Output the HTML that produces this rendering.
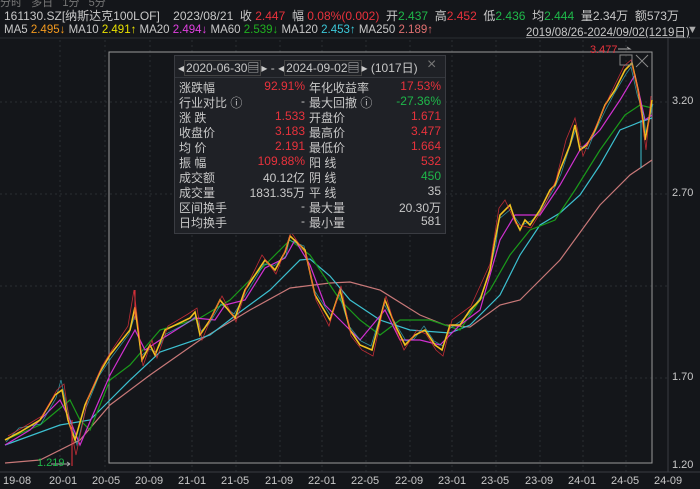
<!DOCTYPE html>
<html><head><meta charset="utf-8"><style>
body{margin:0;background:#14161a;width:700px;height:489px;overflow:hidden;font-family:"Liberation Sans","Noto Sans CJK SC",sans-serif;font-size:11px;color:#c8c8c8;position:relative}
.t{position:absolute;white-space:nowrap}
.r{color:#e8323c}.g{color:#1fb84a}.y{color:#e8e000}.o{color:#f39a1e}.m{color:#e040e0}.gg{color:#20b020}.c{color:#3cc8d8}.p{color:#e07070}
#pop{position:absolute;left:174px;top:55px;width:270px;height:177px;background:#1f2126;border:1px solid #3a3c42}
#pop .row{position:absolute;left:4px;width:262px;height:15px;font-size:12px}
#pop .row span{position:absolute}
</style></head><body>
<div class="t" style="left:0;top:-6px;color:#777">分时 &nbsp; 多日 &nbsp; 1分 &nbsp; 5分</div>
<div class="t" style="left:4px;top:7px;font-size:12px">161130.SZ[纳斯达克100LOF] &nbsp;&nbsp; 2023/08/21 &nbsp;收 <span class="r">2.447</span> &nbsp;幅 <span class="r">0.08%(0.002)</span> &nbsp;开<span class="g">2.437</span> &nbsp;高<span class="r">2.452</span> &nbsp;低<span class="g">2.436</span> &nbsp;均<span class="g">2.444</span> &nbsp;量2.34万 &nbsp;额573万</div>
<div class="t" style="left:4px;top:24px;font-size:11.5px">MA5 <span class="o">2.495↓</span> MA10 <span class="y">2.491↑</span> MA20 <span class="m">2.494↓</span> MA60 <span class="gg">2.539↓</span> MA120 <span class="c">2.453↑</span> MA250 <span class="p">2.189↑</span></div>
<div class="t" style="left:526px;top:24px;font-size:11.5px;text-decoration:underline">2019/08/26-2024/09/02(1219日)</div>
<div class="t" style="left:687px;top:24px;color:#aaa">▼</div>
<svg width="700" height="489" style="position:absolute;left:0;top:0" fill="none">
<g stroke="#2a2d33" stroke-dasharray="2,3" stroke-width="1">
<line x1="0" y1="102" x2="668" y2="102"/><line x1="0" y1="194" x2="668" y2="194"/><line x1="0" y1="286" x2="668" y2="286"/><line x1="0" y1="378" x2="668" y2="378"/>
<line x1="60" y1="40" x2="60" y2="472"/><line x1="105" y1="40" x2="105" y2="472"/><line x1="150" y1="40" x2="150" y2="472"/><line x1="192" y1="40" x2="192" y2="472"/><line x1="236" y1="40" x2="236" y2="472"/><line x1="280" y1="40" x2="280" y2="472"/><line x1="322" y1="40" x2="322" y2="472"/><line x1="366" y1="40" x2="366" y2="472"/><line x1="410" y1="40" x2="410" y2="472"/><line x1="452" y1="40" x2="452" y2="472"/><line x1="496" y1="40" x2="496" y2="472"/><line x1="540" y1="40" x2="540" y2="472"/><line x1="583" y1="40" x2="583" y2="472"/><line x1="626" y1="40" x2="626" y2="472"/>
</g>
<line x1="0" y1="38" x2="700" y2="38" stroke="#2a2d33"/>
<line x1="668" y1="38" x2="668" y2="472" stroke="#3a3c42"/>
<line x1="0" y1="472" x2="700" y2="472" stroke="#3a3c42"/>
<rect x="109" y="52" width="543" height="411" stroke="#9a9a9a" stroke-width="1"/>
<polyline stroke="#c87878" stroke-width="1.2" points="5,463 40,460 80,440 110,405 150,375 200,340 250,310 290,288 330,283 350,282 380,290 420,315 445,325 470,327 500,305 520,300 560,260 600,205 630,175 652,160"/>
<polyline stroke="#3cc0d0" stroke-width="1.2" points="5,445 60,425 90,420 110,400 130,380 160,352 210,335 240,312 270,290 300,260 310,259 330,276 350,300 380,320 410,330 450,333 470,325 500,295 520,255 540,225 560,213 580,195 600,165 620,130 640,122 652,118"/>
<polyline stroke="#1a9a1a" stroke-width="1.2" points="5,440 40,425 70,400 80,420 90,430 110,380 130,365 160,330 200,318 230,300 260,270 290,240 310,255 340,300 360,320 380,335 400,320 430,320 460,330 480,300 490,290 510,255 530,230 555,220 575,190 600,150 625,115 640,105 652,108"/>
<polyline stroke="#d030d0" stroke-width="1.2" points="5,445 30,430 60,400 70,420 80,445 95,410 110,375 135,330 145,350 160,340 195,318 215,320 225,305 245,300 265,268 285,258 295,240 310,265 325,305 340,320 360,340 385,310 400,340 420,340 440,345 460,325 480,310 500,240 515,215 540,215 560,185 580,150 600,130 620,100 635,75 645,120 652,115"/>
<polyline stroke="#3cc0d0" stroke-width="0.8" opacity="0.7" points="6,442 19,428 41,424 56,398 61,380 69,416 77,445 86,408 99,376 111,358 129,334 136,312 141,356 149,349 156,352 166,334 189,322 196,316 201,331 209,324 221,304 234,314 246,294 264,264 274,266 286,256 289,240 304,246 314,290 331,316 339,294 349,326 361,341 371,346 384,304 394,321 406,341 414,339 424,326 434,341 443,346 449,329 461,321 469,314 481,296 489,274 496,244 499,219 511,209 514,216 521,226 524,224 531,221 539,214 551,194 554,189 561,174 569,149 576,129 579,146 588,149 594,134 606,109 614,94 626,74 631,67 637,94 644,116 646,136 647,129 653,104"/>
<polyline stroke="#f0c020" stroke-width="1.6" points="5,440 20,432 40,420 55,395 62,390 68,420 75,440 85,405 100,372 110,355 130,330 135,307 142,360 150,345 155,355 165,330 190,318 195,312 200,335 210,320 220,300 235,318 245,290 265,260 275,270 285,252 290,236 305,250 315,295 330,320 340,290 350,330 360,345 372,350 385,300 395,325 405,345 415,335 425,330 435,345 442,350 450,325 460,325 470,310 480,300 490,270 495,240 500,215 510,205 515,220 520,230 525,220 530,225 540,210 550,190 555,185 560,170 570,145 575,125 580,150 587,145 595,130 605,105 615,90 625,70 632,63 638,90 643,120 645,140 648,125 652,100"/>
<polyline stroke="#e8323c" stroke-width="0.8" opacity="0.8" points="8,436 22,428 42,416 57,390 64,384 70,425 76,455 88,398 102,366 112,350 128,326 134,290 143,366 152,340 157,358 168,326 188,314 197,308 202,340 212,316 222,296 236,322 247,286 262,255 276,274 286,248 291,232 306,254 316,300 329,326 341,286 351,336 362,350 373,356 386,296 396,330 404,350 417,330 426,334 436,350 443,356 452,320 471,306 490,264 499,208 505,200 516,224 531,228 545,205 556,180 566,140 575,118 583,156 596,126 610,95 624,66 631,60 639,95 646,150 651,96"/>
<line x1="641" y1="120" x2="641" y2="168" stroke="#3cc0d0"/>
<line x1="72" y1="420" x2="72" y2="466" stroke="#e8323c"/>
<line x1="135" y1="290" x2="135" y2="320" stroke="#e8323c"/>
<path d="M51 464 H70 M70 464 l-3 -2 M70 464 l-3 2" stroke="#aaa"/>
<path d="M618 49 H630 l-3 -2" stroke="#aaa"/>
<rect x="620" y="55" width="12" height="10" stroke="#888"/>
<path d="M636 55 L648 67 M648 55 L636 67" stroke="#888"/>
</svg>
<div class="t g" style="left:37px;top:457px;font-size:11px">1.219</div>
<div class="t r" style="left:590px;top:44px;font-size:11px">3.477</div>
<div class="t" style="left:672px;top:95px">3.20</div>
<div class="t" style="left:672px;top:187px">2.70</div>
<div class="t" style="left:672px;top:371px">1.70</div>
<div class="t" style="left:672px;top:459px">1.20</div>
<div class="t" style="left:3px;top:475px;font-size:11px;word-spacing:0">19-08</div>
<div class="t" style="left:49px;top:475px">20-01</div><div class="t" style="left:92px;top:475px">20-05</div><div class="t" style="left:135px;top:475px">20-09</div><div class="t" style="left:178px;top:475px">21-01</div><div class="t" style="left:221px;top:475px">21-05</div><div class="t" style="left:265px;top:475px">21-09</div><div class="t" style="left:308px;top:475px">22-01</div><div class="t" style="left:351px;top:475px">22-05</div><div class="t" style="left:395px;top:475px">22-09</div><div class="t" style="left:438px;top:475px">23-01</div><div class="t" style="left:481px;top:475px">23-05</div><div class="t" style="left:525px;top:475px">23-09</div><div class="t" style="left:568px;top:475px">24-01</div><div class="t" style="left:611px;top:475px">24-05</div><div class="t" style="left:654px;top:475px">24-09</div>
<div id="pop">
<div class="t" style="left:3px;top:3px;font-size:12px">◂<span style="border:1px solid #444;padding:0 1px">2020-06-30▤</span>▸ - ◂<span style="border:1px solid #444;padding:0 1px">2024-09-02▤</span>▸ (1017日)</div>
<div class="t" style="left:252px;top:0;font-size:16px;color:#777">×</div>
<div style="position:absolute;left:0;top:21px;width:270px;border-top:1px solid #33363c"></div>
<div class="row" style="top:23px"><span style="left:0">涨跌幅</span><span class="r" style="right:136px">92.91%</span><span style="left:130px">年化收益率</span><span class="r" style="right:0">17.53%</span></div>
<div class="row" style="top:38px"><span style="left:0">行业对比 ⓘ</span><span style="right:136px">-</span><span style="left:130px">最大回撤 ⓘ</span><span class="g" style="right:0">-27.36%</span></div>
<div class="row" style="top:53px"><span style="left:0">涨 跌</span><span class="r" style="right:136px">1.533</span><span style="left:130px">开盘价</span><span class="r" style="right:0">1.671</span></div>
<div class="row" style="top:68px"><span style="left:0">收盘价</span><span class="r" style="right:136px">3.183</span><span style="left:130px">最高价</span><span class="r" style="right:0">3.477</span></div>
<div class="row" style="top:83px"><span style="left:0">均 价</span><span class="r" style="right:136px">2.191</span><span style="left:130px">最低价</span><span class="r" style="right:0">1.664</span></div>
<div class="row" style="top:98px"><span style="left:0">振 幅</span><span class="r" style="right:136px">109.88%</span><span style="left:130px">阳 线</span><span class="r" style="right:0">532</span></div>
<div class="row" style="top:113px"><span style="left:0">成交额</span><span style="right:136px">40.12亿</span><span style="left:130px">阴 线</span><span class="g" style="right:0">450</span></div>
<div class="row" style="top:128px"><span style="left:0">成交量</span><span style="right:136px">1831.35万</span><span style="left:130px">平 线</span><span style="right:0">35</span></div>
<div class="row" style="top:143px"><span style="left:0">区间换手</span><span style="right:136px">-</span><span style="left:130px">最大量</span><span style="right:0">20.30万</span></div>
<div class="row" style="top:158px"><span style="left:0">日均换手</span><span style="right:136px">-</span><span style="left:130px">最小量</span><span style="right:0">581</span></div>
</div>
</body></html>
